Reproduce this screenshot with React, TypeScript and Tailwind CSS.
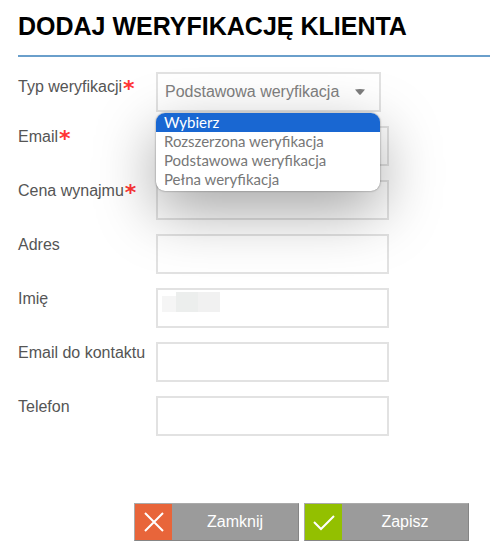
import React, { useState } from "react";

const TYPES = [
  "Wybierz",
  "Rozszerzona weryfikacja",
  "Podstawowa weryfikacja",
  "Pełna weryfikacja",
];

const FIELDS = [
  { id: "email", label: "Email", type: "email", required: true },
  { id: "price", label: "Cena wynajmu", type: "text", required: true },
  { id: "address", label: "Adres", type: "text" },
  { id: "firstName", label: "Imię", type: "text", masked: true },
  { id: "contactEmail", label: "Email do kontaktu", type: "email" },
  { id: "phone", label: "Telefon", type: "tel" },
];

function FieldLabel({ id, text, required }: { id: string; text: string; required?: boolean }) {
  return (
    <label htmlFor={id} className="flex h-[22px] w-[138px] shrink-0 items-center text-base leading-[22px] whitespace-nowrap text-[#555]">
      {text}
      {required && <span className="pt-1 pl-px font-['DejaVu_Sans',sans-serif] text-[22px] leading-[22px] font-bold text-[#ff3535]">*</span>}
    </label>
  );
}

// Blurred-out value shown instead of personal data
function MaskedValue() {
  return (
    <div className="pointer-events-none absolute top-1 left-[6px] flex h-5 w-[58px]" aria-hidden="true">
      <span className="mt-1 w-[14px] bg-[#f5f5f5]" />
      <span className="w-[22px] bg-[#eceeed]" />
      <span className="w-[22px] bg-[#f1f1f1]" />
    </div>
  );
}

function TypeSelect() {
  const [value, setValue] = useState("Podstawowa weryfikacja");
  const [active, setActive] = useState("Wybierz");
  const [open, setOpen] = useState(true);

  return (
    <div className="relative w-[225px]">
      <select
        id="type"
        value={value}
        onChange={(e) => setValue(e.target.value)}
        onMouseDown={(e) => {
          e.preventDefault();
          setOpen(!open);
        }}
        className="h-10 w-full appearance-none border-2 border-[#e2e2e2] bg-white pl-[7px] text-base text-[#808080] outline-none"
      >
        {TYPES.map((t) => (
          <option key={t}>{t}</option>
        ))}
      </select>
      <svg className="pointer-events-none absolute top-[17px] right-4 h-[6px] w-[10px]" viewBox="0 0 10 6">
        <path d="M0 0.5Q5 -0.5 10 0.5L6 5.3Q5 6.3 4 5.3Z" fill="#7d7d7d" />
      </svg>

      {open && (
        <ul
          role="listbox"
          aria-label="Typ weryfikacji"
          className="absolute top-[41px] left-0 z-10 w-[224px] overflow-hidden rounded-[9px] bg-white pb-[2px] font-['Lato','Noto_Sans',sans-serif] text-[15px] leading-[19px] text-[#777] shadow-[0_0_2px_rgba(0,0,0,0.5),0_20px_60px_rgba(0,0,0,0.36)]"
        >
          {TYPES.map((t) => (
            <li
              key={t}
              role="option"
              aria-selected={t === active}
              onMouseEnter={() => setActive(t)}
              onClick={() => {
                setValue(t);
                setOpen(false);
              }}
              className={`cursor-default pl-2 ${t === active ? "bg-[#1967d2] text-white" : ""}`}
            >
              {t}
            </li>
          ))}
        </ul>
      )}
    </div>
  );
}

function ActionButton({ type, label, iconClass, path }: {
  type: "button" | "submit";
  label: string;
  iconClass: string;
  path: string;
}) {
  return (
    <button
      type={type}
      className="flex h-[38px] w-[165px] items-stretch border border-[#858585] border-t-[#aaa] border-l-[#aaa] bg-[#9b9b9b] text-base text-white"
    >
      <span className={`flex w-[37px] items-center justify-center ${iconClass}`}>
        <svg className="h-6 w-6" viewBox="0 0 24 24" fill="none" stroke="white" strokeWidth="2">
          <path d={path} />
        </svg>
      </span>
      <span className="flex flex-1 items-center justify-center">{label}</span>
    </button>
  );
}

export default function App() {
  return (
    <form
      onSubmit={(e) => e.preventDefault()}
      className="bg-white pt-2 pr-[5px] pb-3 pl-[18px] font-['Liberation_Sans',Arial,sans-serif]"
    >
      <h1 className="border-b-2 border-[#6a9fcb] pb-[11px] text-[25px] leading-9 font-bold text-black">
        DODAJ WERYFIKACJĘ KLIENTA
      </h1>

      <div className="mt-[15px] flex flex-col gap-[14px]">
        <div className="flex">
          <div className="pt-1">
            <FieldLabel id="type" text="Typ weryfikacji" required />
          </div>
          <TypeSelect />
        </div>
        {FIELDS.map((f) => (
          <div key={f.id} className="flex">
            <FieldLabel id={f.id} text={f.label} required={f.required} />
            <div className="relative w-[233px]">
              <input
                id={f.id}
                type={f.type}
                required={f.required}
                className="h-10 w-full border-2 border-[#e2e2e2] bg-white px-2 text-base text-[#808080] outline-none"
              />
              {f.masked && <MaskedValue />}
            </div>
          </div>
        ))}
      </div>

      <div className="mt-[67px] flex justify-end gap-[5px] pr-[21px]">
        <ActionButton type="button" label="Zamknij" iconClass="bg-[#e8653a]" path="M3 3L21 21M21 3L3 21" />
        <ActionButton type="submit" label="Zapisz" iconClass="bg-[#93c000]" path="M2 12L9 19L22 6" />
      </div>
    </form>
  );
}
